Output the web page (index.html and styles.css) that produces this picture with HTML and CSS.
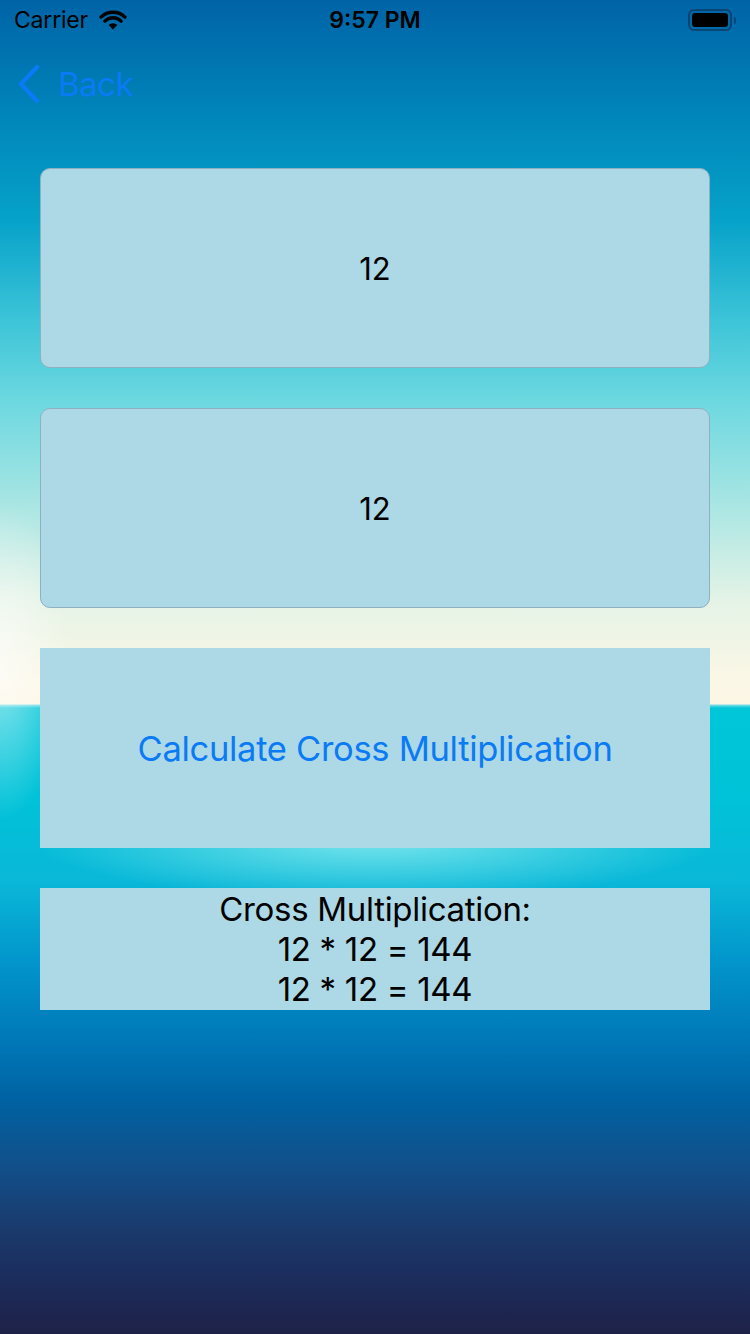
FILE: index.html
```html
<!DOCTYPE html>
<html>
<head>
<meta charset="utf-8">
<link rel="stylesheet" href="styles.css">
</head>
<body>
<div class="screen">
  <div class="status-bar">
    <div class="carrier">
      <span>Carrier</span>
      <svg class="wifi" width="30" height="22" viewBox="0 0 30 22">
        <path d="M15 21.5 L10.6 16.9 A6.4 6.4 0 0 1 19.4 16.9 Z" fill="#000"/>
        <path d="M6.9 13.1 A11.6 11.6 0 0 1 23.1 13.1" stroke="#000" stroke-width="3.4" fill="none" stroke-linecap="round"/>
        <path d="M3 9.1 A17.2 17.2 0 0 1 27 9.1" stroke="#000" stroke-width="3.4" fill="none" stroke-linecap="round"/>
      </svg>
    </div>
    <div class="time">9:57 PM</div>
    <div class="battery">
      <div class="battery-body"><div class="battery-fill"></div></div>
      <div class="battery-cap"></div>
    </div>
  </div>
  <div class="nav">
    <button class="back">
      <svg width="26" height="40" viewBox="0 0 26 40">
        <path d="M21 3 L5 20 L21 37" stroke="#0a7af5" stroke-width="4.4" fill="none" stroke-linecap="round" stroke-linejoin="round"/>
      </svg>
      <span>Back</span>
    </button>
  </div>
  <div class="content">
    <div class="field">12</div>
    <div class="field">12</div>
    <div class="calc">Calculate Cross Multiplication</div>
    <div class="result">
      <div>Cross Multiplication:</div>
      <div>12 * 12 = 144</div>
      <div>12 * 12 = 144</div>
    </div>
  </div>
</div>
</body>
</html>
```
FILE: styles.css
```css
* { box-sizing: border-box; }
html, body { margin: 0; padding: 0; }
body {
  width: 750px;
  height: 1334px;
  overflow: hidden;
  font-family: Inter, "Liberation Sans", sans-serif;
}
.screen {
  width: 750px;
  height: 1334px;
  position: relative;
  background:
    radial-gradient(ellipse 340px 60px at 375px 840px, rgba(140,236,240,0.85), rgba(140,236,240,0) 100%),
    radial-gradient(ellipse 70px 160px at 0px 660px, rgba(255,255,255,0.6), rgba(255,255,255,0) 100%),
    linear-gradient(to bottom,
      #0063a6 0px,
      #0084b9 110px,
      #06a2c9 220px,
      #3cc4d8 320px,
      #6cd8e0 400px,
      #a6e5e3 500px,
      #e4f3e6 600px,
      #fbf7e6 680px,
      #fcf6e4 704px,
      #7adde6 705px,
      #00c6d8 708px,
      #00c2d8 800px,
      #0ab8d8 880px,
      #0296cc 960px,
      #0078b8 1040px,
      #0062a2 1100px,
      #124e88 1170px,
      #1a3a6c 1230px,
      #1c2a58 1290px,
      #1e2248 1334px);
}
.status-bar {
  height: 40px;
  display: flex;
  align-items: center;
  justify-content: space-between;
  padding: 0 14px;
  position: relative;
  font-family: Inter, "Liberation Sans", sans-serif;
}
.carrier {
  display: flex;
  align-items: center;
  gap: 8px;
  font-size: 23px;
  color: #000;
  letter-spacing: -0.2px;
}
.wifi { margin-top: -2px; margin-left: 2px; }
.time {
  position: absolute;
  left: 0;
  right: 0;
  text-align: center;
  font-size: 23px;
  font-weight: 600;
  color: #000;
  pointer-events: none;
}
.battery {
  display: flex;
  align-items: center;
  gap: 2px;
}
.battery-body {
  width: 44px;
  height: 22px;
  border: 2px solid rgba(20,40,70,0.55);
  border-radius: 6px;
  padding: 2px;
}
.battery-fill {
  width: 100%;
  height: 100%;
  background: #000;
  border-radius: 3px;
}
.battery-cap {
  width: 2px;
  height: 7px;
  background: rgba(20,40,70,0.55);
  border-radius: 0 2px 2px 0;
}
.nav {
  height: 88px;
  display: flex;
  align-items: center;
  padding-left: 16px;
}
.back {
  display: flex;
  align-items: center;
  gap: 16px;
  background: none;
  border: 0;
  padding: 0;
  color: #0a7af5;
  font-family: Inter, "Liberation Sans", sans-serif;
  font-size: 33px;
}
.back span { letter-spacing: -0.5px; }
.content {
  padding: 40px 40px 0;
  display: flex;
  flex-direction: column;
  gap: 40px;
}
.field {
  height: 200px;
  background: #add8e6;
  border: 1px solid #8fb0bf;
  border-radius: 10px;
  display: flex;
  align-items: center;
  justify-content: center;
  font-size: 31px;
  color: #000;
}
.calc {
  height: 200px;
  background: #add8e6;
  display: flex;
  align-items: center;
  justify-content: center;
  font-size: 34.5px;
  color: #0a7af5;
  letter-spacing: -0.3px;
}
.result {
  height: 122px;
  background: #add8e6;
  display: flex;
  flex-direction: column;
  align-items: center;
  justify-content: center;
  font-size: 33px;
  line-height: 40px;
  color: #000;
  letter-spacing: -0.3px;
}
```
